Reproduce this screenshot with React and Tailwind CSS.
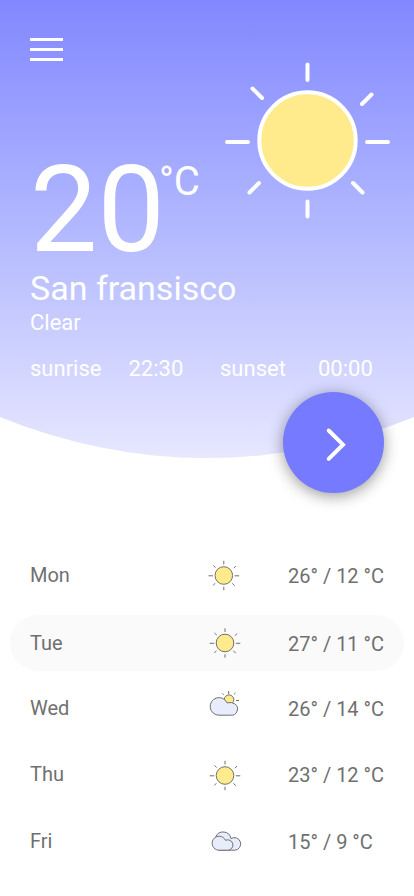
import React from "react";

function BigSun() {
  return (
    <svg width="170" height="160" viewBox="222 60 170 160" fill="none" stroke="#fff" strokeWidth="4" strokeLinecap="round" className="shrink-0">
      <circle cx="307.5" cy="140.5" r="48.2" fill="#ffeb8c" />
      <path d="M307.500 64.500V80M307.500 201.500V216.500M227 142H248M367 142H388M252.500 88.500L262 98M371.500 94.500L362 104M259 183L249.500 192.500M353 183L362.500 192.500" />
    </svg>
  );
}

function SunIcon({ cx, cy }) {
  return (
    <svg width="36" height="36" viewBox="0 0 36 36" fill="none" stroke="#707070">
      <g transform={`translate(${cx} ${cy})`}>
        <circle r="8.8" fill="#ffeb8c" />
        <path d="M0-14.700V-11M0 11.200V14.700M-15.300.3H-10.800M10.800.3H15.300M-10.500-10L-8.300-8M12-9.500L10-7.300M-8.500 7.800L-10.700 9.800M8.500 7.800L10.700 10.200" />
      </g>
    </svg>
  );
}

function PartlyCloudyIcon() {
  return (
    <svg width="36" height="36" viewBox="0 0 36 36" fill="none" stroke="#707070">
      <path d="M21.700 1V4M15.200 3.300L16.700 4.800M28.600 2.800L27 4.300M29 10.500H32M27.500 14.500L29 16" />
      <circle cx="22" cy="9.700" r="4.800" fill="#ffeb8c" />
      <path d="M12 25.200H23.600A6.200 6.200 0 0 0 27.600 13.800Q25 11.800 20 12.800A8.800 8.800 0 1 0 12 25.200Z" fill="#e8edfb" />
    </svg>
  );
}

function CloudsIcon() {
  return (
    <svg width="36" height="36" viewBox="0 0 36 36" fill="#e8edfb" stroke="#707070">
      <path d="M11.700 27.200H27.800A6.300 6.300 0 1 0 24 15.600A8 8 0 0 0 8.700 14Z" />
      <path d="M11.500 27.200H20.700A5.200 5.200 0 1 0 18.500 17.300A7 7 0 1 0 11.500 27.200Z" />
    </svg>
  );
}

const days = [
  { day: "Mon", temp: "26° / 12 °C", icon: <SunIcon cx={16.8} cy={18.5} />, row: "" },
  { day: "Tue", temp: "27° / 11 °C", icon: <SunIcon cx={18} cy={18} />, row: "mt-3 bg-[#fafafa]" },
  { day: "Wed", temp: "26° / 14 °C", icon: <PartlyCloudyIcon />, row: "mt-[9px]" },
  { day: "Thu", temp: "23° / 12 °C", icon: <SunIcon cx={18} cy={19.5} />, row: "mt-[10px]" },
  { day: "Fri", temp: "15° / 9 °C", icon: <CloudsIcon />, row: "mt-[11px]" },
];

export default function App() {
  return (
    <main className="h-[896px] w-[414px] overflow-hidden bg-white font-['Roboto',sans-serif]">
      <header className="h-[458px] bg-linear-to-b from-[#8387ff] to-[#e7e7ff] pl-[30px] text-white [clip-path:circle(543px_at_50%_-85px)]">
        <div className="flex h-[268px]">
          <div className="w-48 shrink-0 pt-[38px]">
            <button aria-label="Menu" className="flex w-[33px] flex-col gap-[7px]">
              <span className="h-[3px] w-full bg-white" />
              <span className="h-[3px] w-full bg-white" />
              <span className="h-[3px] w-full bg-white" />
            </button>
            <div className="mt-[89px] flex items-start">
              <span className="text-[120px] leading-[120px]">20</span>
              <span className="-ml-[6px] pt-2 text-[40px] leading-[48px]">°C</span>
            </div>
          </div>
          <div className="pt-[60px]"><BigSun /></div>
        </div>
        <h1 className="pb-[2px] text-[34px] leading-10">San fransisco</h1>
        <p className="text-[22px] leading-[26px]">Clear</p>
        <div className="mt-5 flex text-[22px] leading-[26px]">
          <span className="w-[98.5px]">sunrise</span>
          <span className="w-[91.5px]">22:30</span>
          <span className="w-[98px]">sunset</span>
          <span>00:00</span>
        </div>
      </header>
      <button aria-label="Next" className="relative -mt-[66px] ml-[283px] flex size-[101px] items-center justify-center rounded-full bg-[#757aff] shadow-[0_3px_15px_rgba(0,0,0,0.4)]">
        <svg width="101" height="101" viewBox="283 392 101 101" fill="none" stroke="#fff" strokeWidth="4" strokeLinecap="round">
          <path d="M328.700 430.500L343 444.700L328.700 458.800" />
        </svg>
      </button>
      <section className="mx-[10px] mt-[54px] text-xl leading-6 text-[#707070]">
        {days.map((d) => (
          <div key={d.day} className={`flex h-14 items-center rounded-full pl-5 ${d.row}`}>
            <span className="w-[177px]">{d.day}</span>
            {d.icon}
            <span className="ml-[45px] pt-[2px] whitespace-nowrap">{d.temp}</span>
          </div>
        ))}
      </section>
    </main>
  );
}
